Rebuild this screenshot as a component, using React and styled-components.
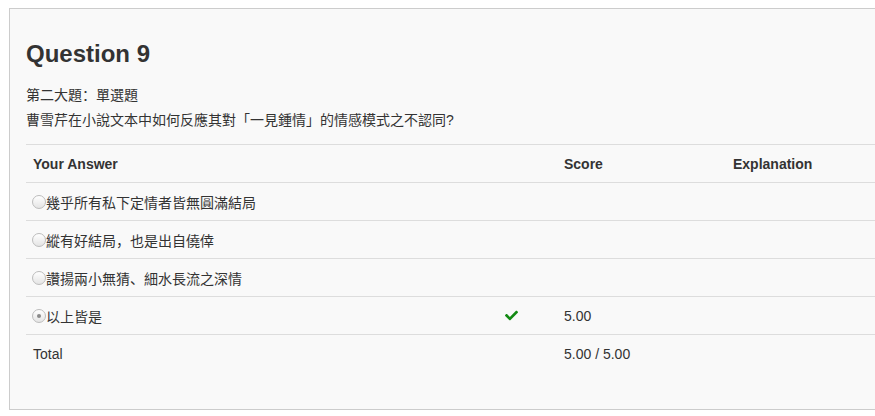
import React from 'react'
import styled, { createGlobalStyle } from 'styled-components'
import { FaCheck } from 'react-icons/fa'

const GlobalStyle = createGlobalStyle`
    html, body {
        margin: 0;
        padding: 0;
        background: #ffffff;
        overflow: hidden;
    }
    body {
        font-family: "Liberation Sans", Arial, "Noto Sans CJK SC", sans-serif;
        color: #333333;
    }
`;

const Page = styled.div`
    padding: 8px 0 0 9px;
    height: 416px;
    box-sizing: border-box;
`;

const Panel = styled.div`
    width: 1000px;
    height: 402px;
    box-sizing: border-box;
    background: #f9f9f9;
    border: 1px solid #cccccc;
    padding: 31px 16px 0 16px;
`;

const Title = styled.h2`
    margin: 0;
    font-size: 24px;
    line-height: 28px;
    font-weight: 700;
    color: #333333;
`;

const Prompt = styled.div`
    margin-top: 15px;
    font-size: 14px;
    line-height: 25px;
`;

const Table = styled.table`
    margin-top: 11px;
    width: 100%;
    border-collapse: collapse;
    table-layout: fixed;
    font-size: 14px;
`;

const Row = styled.tr`
    border-top: 1px solid #dddddd;
`;

const Head = styled.th`
    height: 37px;
    padding: 0 7px;
    text-align: left;
    font-weight: 700;
    vertical-align: middle;
`;

const Cell = styled.td`
    height: 37px;
    padding: 0 ${p => (p.$tight ? '6px' : '7px')};
    vertical-align: middle;
    white-space: nowrap;
`;

const Option = styled.span`
    display: inline-flex;
    align-items: center;
`;

const Radio = styled.span`
    width: 12px;
    height: 12px;
    border-radius: 50%;
    border: 1px solid #bdbdbd;
    background: linear-gradient(#ffffff, #e4e4e4);
    display: inline-flex;
    align-items: center;
    justify-content: center;
    &::after {
        content: '';
        width: 4px;
        height: 4px;
        border-radius: 50%;
        background: ${p => (p.$checked ? '#8a8a8a' : 'transparent')};
    }
`;

const Check = styled(FaCheck)`
    color: #138a13;
    width: 13px;
    height: 13px;
    display: block;
`;

const answers = [
    { text: '幾乎所有私下定情者皆無圓滿結局' },
    { text: '縱有好結局，也是出自僥倖' },
    { text: '讚揚兩小無猜、細水長流之深情' },
    { text: '以上皆是', checked: true, score: '5.00' },
]

const App = () => {
  return (
    <Page>
        <GlobalStyle/>
        <Panel>
            <Title>Question 9</Title>
            <Prompt>
                <div>第二大題：單選題</div>
                <div>曹雪芹在小說文本中如何反應其對「一見鍾情」的情感模式之不認同?</div>
            </Prompt>
            <Table>
                <colgroup>
                    <col style={{ width: 472 }}/>
                    <col style={{ width: 59 }}/>
                    <col style={{ width: 169 }}/>
                    <col/>
                </colgroup>
                <tbody>
                    <Row>
                        <Head>Your Answer</Head>
                        <Head></Head>
                        <Head>Score</Head>
                        <Head>Explanation</Head>
                    </Row>
                    {answers.map(a => (
                        <Row key={a.text}>
                            <Cell $tight>
                                <Option>
                                    <Radio $checked={a.checked}/>
                                    {a.text}
                                </Option>
                            </Cell>
                            <Cell>{a.checked && <Check/>}</Cell>
                            <Cell>{a.score}</Cell>
                            <Cell></Cell>
                        </Row>
                    ))}
                    <Row>
                        <Cell>Total</Cell>
                        <Cell></Cell>
                        <Cell>5.00 / 5.00</Cell>
                        <Cell></Cell>
                    </Row>
                </tbody>
            </Table>
        </Panel>
    </Page>
  )
}

export default App
